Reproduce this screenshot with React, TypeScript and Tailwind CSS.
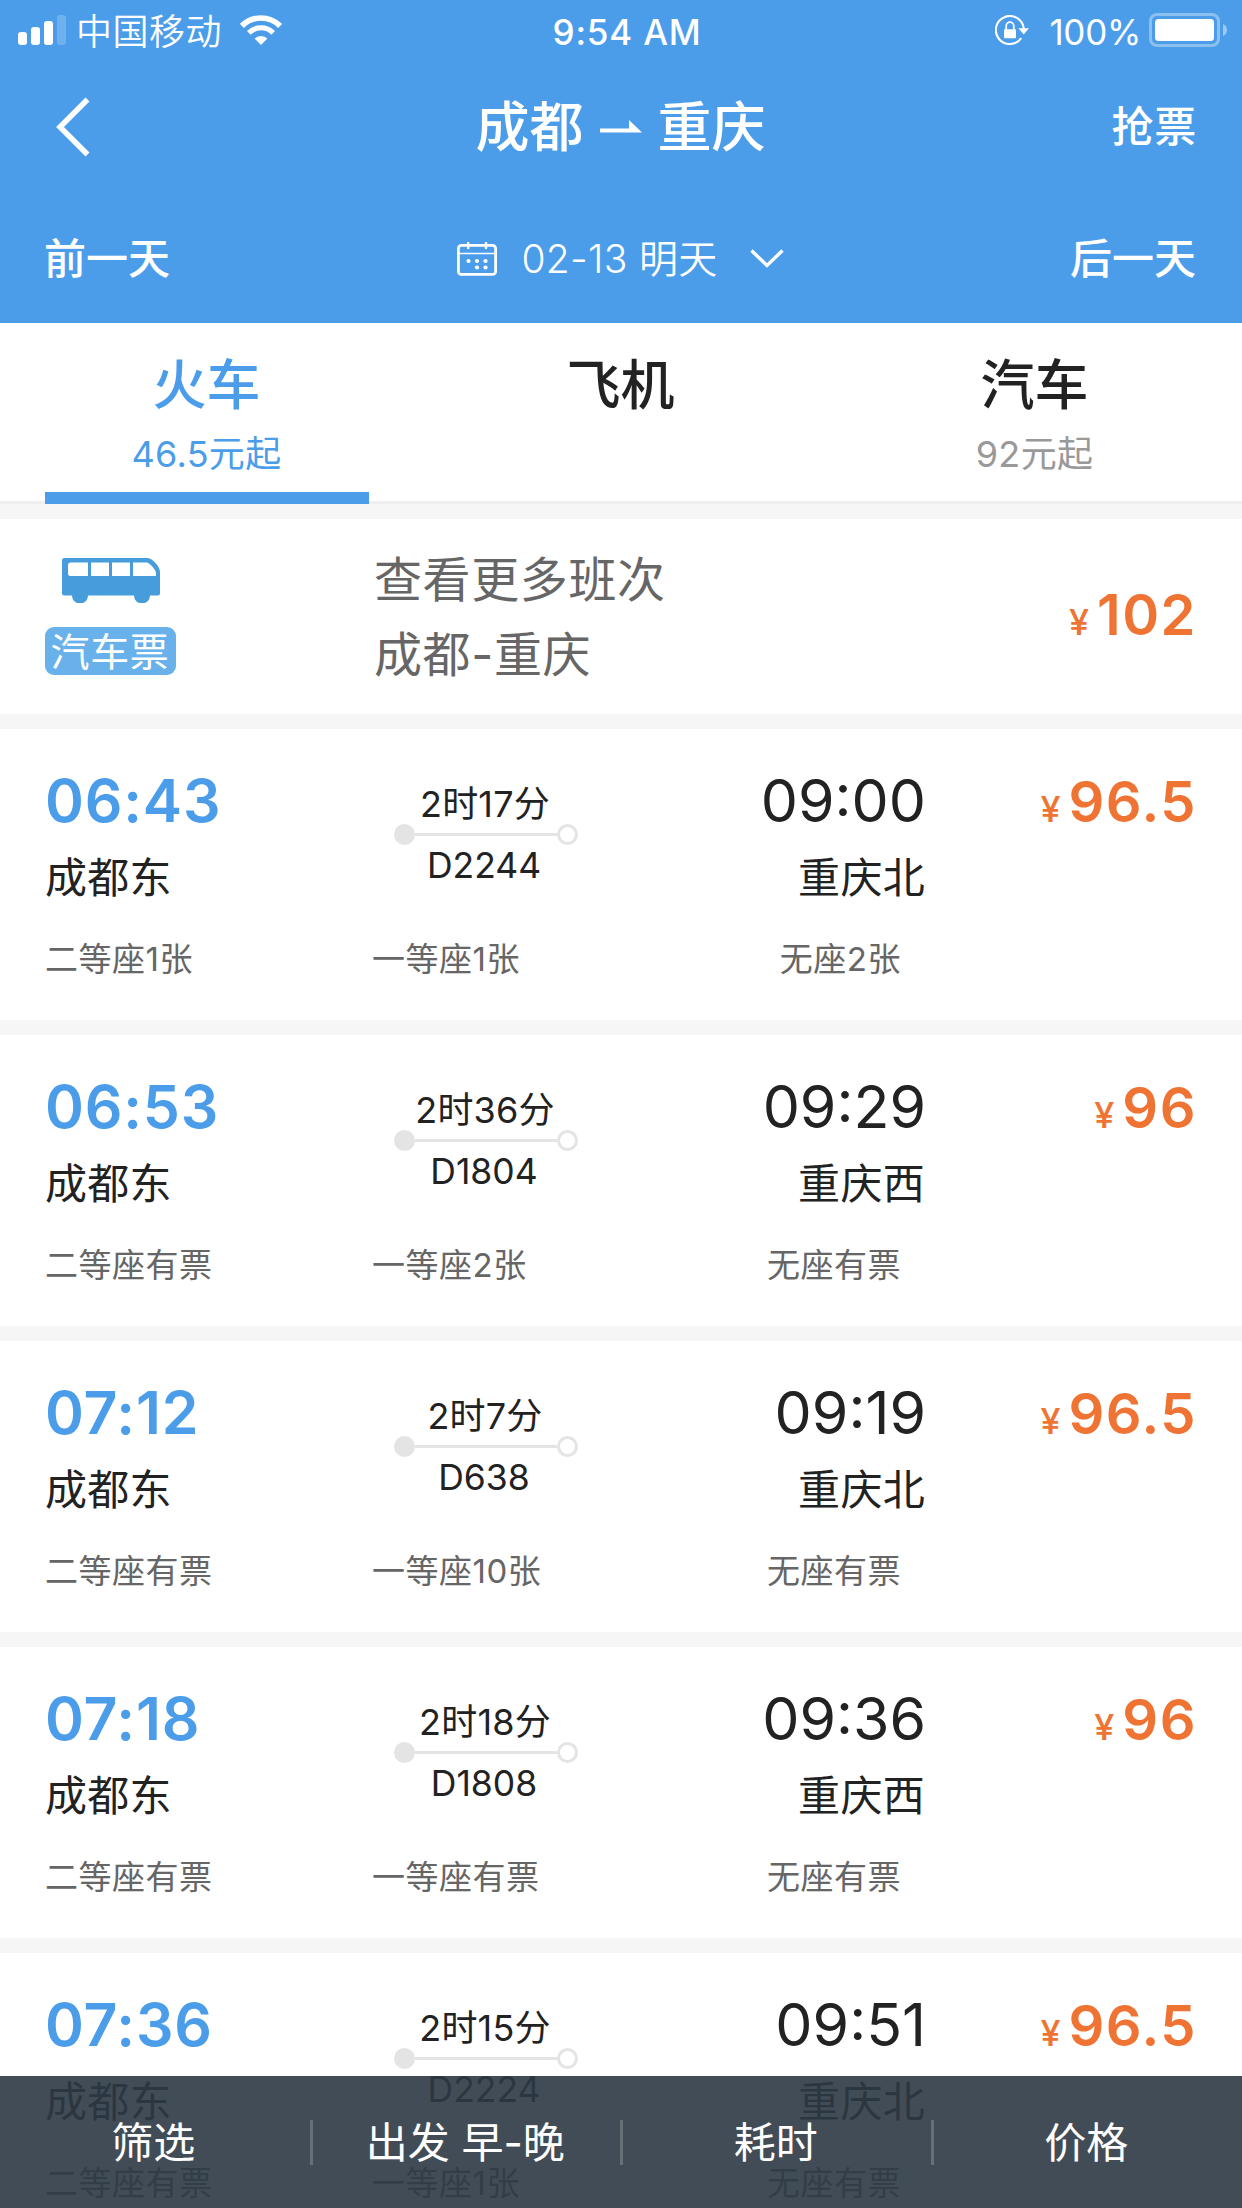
import React, { useState } from 'react';

interface Train {
  depart: string;
  arrive: string;
  from: string;
  to: string;
  duration: string;
  code: string;
  price: string;
  seats: [string, string, string];
}

const TRAINS: Train[] = [
  { depart: '06:43', arrive: '09:00', from: '成都东', to: '重庆北', duration: '2时17分', code: 'D2244', price: '96.5', seats: ['二等座1张', '一等座1张', '无座2张'] },
  { depart: '06:53', arrive: '09:29', from: '成都东', to: '重庆西', duration: '2时36分', code: 'D1804', price: '96', seats: ['二等座有票', '一等座2张', '无座有票'] },
  { depart: '07:12', arrive: '09:19', from: '成都东', to: '重庆北', duration: '2时7分', code: 'D638', price: '96.5', seats: ['二等座有票', '一等座10张', '无座有票'] },
  { depart: '07:18', arrive: '09:36', from: '成都东', to: '重庆西', duration: '2时18分', code: 'D1808', price: '96', seats: ['二等座有票', '一等座有票', '无座有票'] },
  { depart: '07:36', arrive: '09:51', from: '成都东', to: '重庆北', duration: '2时15分', code: 'D2224', price: '96.5', seats: ['二等座有票', '一等座1张', '无座有票'] },
];

const TABS = [
  { id: 'train', label: '火车', price: '46.5元起' },
  { id: 'plane', label: '飞机', price: '' },
  { id: 'bus', label: '汽车', price: '92元起' },
];

const FILTERS = ['筛选', '出发 早-晚', '耗时', '价格'];

const WifiIcon = () => (
  <svg width="42" height="30" viewBox="0 0 42 30" fill="none" stroke="white">
    <path d="M1.9 10.9A27 27 0 0 1 40.1 10.9" strokeWidth="5.6" />
    <path d="M8.8 17.8A17.3 17.3 0 0 1 33.2 17.8" strokeWidth="5.2" />
    <path d="M21 30L14.6 23.6A9 9 0 0 1 27.4 23.6Z" fill="white" stroke="none" />
  </svg>
);

const RotationLockIcon = () => (
  <svg width="34" height="30" viewBox="0 0 34 30" fill="none" stroke="white">
    <path d="M28.8 14A14 14 0 1 0 26.2 23.2" strokeWidth="2.1" />
    <path d="M23.4 13.2H34L28.7 19.4Z" fill="white" stroke="none" />
    <rect x="9" y="14.2" width="12" height="9" rx="1" fill="white" stroke="none" />
    <path d="M11.2 15V11a3.8 3.9 0 0 1 7.6 0V15" strokeWidth="1.7" />
  </svg>
);

const BatteryIcon = () => (
  <svg width="78" height="34" viewBox="0 0 78 34" fill="none">
    <rect x="1.5" y="1.5" width="68" height="31" rx="6.5" stroke="white" strokeOpacity="0.36" strokeWidth="3" />
    <rect x="6" y="6" width="59" height="22" rx="3.5" fill="white" />
    <path d="M74 11C77 12.5 78 14.5 78 17S77 21.5 74 23Z" fill="white" fillOpacity="0.45" />
  </svg>
);

const CalendarIcon = () => (
  <svg width="40" height="34" viewBox="0 0 40 34" fill="none" stroke="white">
    <rect x="1.4" y="3.4" width="37.2" height="29" rx="3" strokeWidth="2.8" />
    <path d="M2 11.5H38" strokeWidth="1.7" />
    <path d="M11.2 1.2V6M29 1.2V6" strokeWidth="2.6" strokeLinecap="round" />
    <g fill="white" stroke="none">
      <circle cx="11.5" cy="19" r="2.1" />
      <circle cx="20" cy="19" r="2.1" />
      <circle cx="28.5" cy="19" r="2.1" />
      <circle cx="20" cy="25.5" r="2.1" />
      <circle cx="28.5" cy="25.5" r="2.1" />
    </g>
  </svg>
);

const BusIcon = () => (
  <svg width="98" height="45" viewBox="0 0 98 45">
    <path d="M2.5 0H85C90 0 98 8 98 14V35.5Q98 37.5 96 37.5H88A8 8 0 0 1 72 37.5H26A8 8 0 0 1 10 37.5H2.5Q0 37.5 0 35V2.5Q0 0 2.5 0Z" fill="#479cdb" />
    <g fill="white">
      <path d="M8.5 4.5H26V18H8.5Q6 18 6 15.5V7Q6 4.5 8.5 4.5Z" />
      <path d="M29 4.5H47V18H29Z" />
      <path d="M50 4.5H68V18H50Z" />
      <path d="M71 4.5H85.5C89 6.5 94 12 94 15.5V18H71Z" />
    </g>
  </svg>
);

const StatusBar = () => (
  <div className="flex h-[60px] items-center pl-[18px] pr-[15px]">
    <div className="flex flex-1 items-center">
      <div className="flex h-[30px] w-12 items-end justify-between">
        <div className="h-[13px] w-[9px] rounded-[3px] bg-white" />
        <div className="h-[18px] w-[9px] rounded-[3px] bg-white" />
        <div className="h-6 w-[9px] rounded-[3px] bg-white" />
        <div className="h-[30px] w-[9px] rounded-[3px] bg-white/20" />
      </div>
      <span className="ml-[10px] mr-[18px] mt-[3px] text-[36px] font-[350] leading-[60px] tracking-[0.5px]">中国移动</span>
      <WifiIcon />
    </div>
    <span className="ml-[9px] mt-[3px] text-[35px] font-medium leading-[60px] tracking-[0.8px]">9:54 AM</span>
    <div className="flex flex-1 items-center justify-end">
      <RotationLockIcon />
      <span className="ml-[20px] mr-[8px] mt-[3px] text-[35px] leading-[60px] tracking-[-0.3px]">100%</span>
      <BatteryIcon />
    </div>
  </div>
);

const Header = () => (
  <header className="h-[323px] bg-[#4b9dea] text-white">
    <StatusBar />
    <div className="grid h-[134px] grid-cols-[1fr_auto_1fr] items-center px-[45px]">
      <button className="ml-[11px] w-fit">
        <svg width="34" height="60" viewBox="0 0 34 60" fill="none" stroke="white" strokeWidth="5.5">
          <path d="M31.5 2.5L4 30L31.5 57.5" />
        </svg>
      </button>
      <h1 className="-ml-px flex items-center pt-[2px] text-[54px] font-medium leading-[60px]">
        成都
        <svg className="mx-[16px] -mt-[3px]" width="42" height="13" viewBox="0 0 42 13" fill="white">
          <path d="M0 8.5H29V0L42 12.5H0Z" />
        </svg>
        重庆
      </h1>
      <button className="text-right text-[42px] font-medium leading-[60px] tracking-[0.8px]">抢票</button>
    </div>
    <div className="grid h-[129px] grid-cols-[1fr_auto_1fr] items-center px-[45px]">
      <button className="-ml-px pt-px text-left text-[42px] font-medium leading-[60px]">前一天</button>
      <button className="-ml-px flex items-center">
        <CalendarIcon />
        <span className="ml-[24px] mr-[32px] text-[39px] font-[350] leading-[60px] tracking-[0.3px]">02-13 明天</span>
        <svg width="34" height="20" viewBox="0 0 34 20" fill="none" stroke="white" strokeWidth="3.4">
          <path d="M1.5 1.5L17 16.5L32.5 1.5" />
        </svg>
      </button>
      <button className="pr-px pt-px text-right text-[42px] font-medium leading-[60px]">后一天</button>
    </div>
  </header>
);

interface PriceProps {
  value: string;
}

const Price: React.FC<PriceProps> = ({ value }) => (
  <div className="flex items-baseline justify-end gap-[8px] text-[#ef7434]">
    <span className="text-[36px] font-medium leading-none">¥</span>
    <span className="text-[56px] font-semibold leading-[62px] tracking-[1.5px]">{value}</span>
  </div>
);

const BusCard = () => (
  <section className="flex h-[195px] items-center bg-white px-[45px]">
    <div className="flex w-[329px] flex-col">
      <div className="ml-[17px] h-[69px]">
        <BusIcon />
      </div>
      <span className="h-12 w-[131px] rounded-[9px] bg-[#68b1eb] pr-px text-center text-[39px] leading-[50px] tracking-[0.6px] text-white">汽车票</span>
    </div>
    <div className="flex-1 pt-px text-[48px] leading-[75px] tracking-[0.6px] text-[#666]">
      <p>查看更多班次</p>
      <p>成都-重庆</p>
    </div>
    <div className="pb-[3px]">
      <Price value="102" />
    </div>
  </section>
);

interface TrainCardProps {
  train: Train;
}

const TrainCard: React.FC<TrainCardProps> = ({ train }) => (
  <section className="h-[291px] shrink-0 bg-white px-[45px] text-[#222]">
    <div className="grid h-[210px] grid-cols-[349px_184px_348px_1fr]">
      <div className="pt-[41px]">
        <p className="text-[59px] font-semibold leading-[62px] tracking-[0.8px] text-[#4b9dea]">{train.depart}</p>
        <p className="mt-[15px] text-[42px] leading-[62px] tracking-[0.3px]">{train.from}</p>
      </div>
      <div className="pt-[54px] text-center">
        <p className="-ml-[2px] text-[36px] leading-[43px] tracking-[0.2px]">{train.duration}</p>
        <div className="-mt-[2px] flex h-[21px] items-center">
          <div className="size-[21px] rounded-full bg-[#e4e4e4]" />
          <div className="h-[3px] flex-1 bg-[#e4e4e4]" />
          <div className="size-[21px] rounded-full border-3 border-[#e4e4e4]" />
        </div>
        <p className="-ml-[4px] text-[35.5px] leading-[42px]">{train.code}</p>
      </div>
      <div className="pt-[41px] text-right">
        <p className="text-[59px] leading-[62px]">{train.arrive}</p>
        <p className="mr-px mt-[15px] text-[42px] leading-[62px] tracking-[0.3px]">{train.to}</p>
      </div>
      <div className="pt-[42px]">
        <Price value={train.price} />
      </div>
    </div>
    <div className="grid grid-cols-[327px_264px_265px] text-[33px] leading-[40px] tracking-[0.5px] text-[#666]">
      <span>{train.seats[0]}</span>
      <span>{train.seats[1]}</span>
      <span className="text-right">{train.seats[2]}</span>
    </div>
  </section>
);

const App: React.FC = () => {
  const [activeTab, setActiveTab] = useState('train');

  return (
    <div className="relative h-[2208px] w-[1242px] overflow-hidden bg-[#f6f6f6] font-['Inter','Noto_Sans_CJK_SC',sans-serif]">
      <Header />

      {/* Transport tabs */}
      <nav className="grid h-[181px] grid-cols-3 border-b-3 border-[#efefef] bg-white">
        {TABS.map((tab) => {
          const active = tab.id === activeTab;
          return (
            <button
              key={tab.id}
              onClick={() => setActiveTab(tab.id)}
              className={`flex h-[181px] flex-col items-center pt-[32px] ${active ? 'text-[#4b9dea]' : 'text-[#222]'}`}
            >
              <span className="-ml-px text-[54px] font-medium leading-[62px]">{tab.label}</span>
              <span className={`-ml-px mt-[15px] h-[44px] text-[36px] leading-[44px] tracking-[0.3px] ${active ? '' : 'text-[#999]'}`}>{tab.price}</span>
              {active && <div className="mt-[16px] h-3 w-[324px] bg-[#4b9dea]" />}
            </button>
          );
        })}
      </nav>

      {/* Results */}
      <main className="flex flex-col gap-[15px] pt-[15px]">
        <BusCard />
        {TRAINS.map((train) => (
          <TrainCard key={train.code} train={train} />
        ))}
      </main>

      {/* Sort bar, floats over the list */}
      <footer className="absolute inset-x-0 bottom-0 grid h-[132px] grid-cols-4 items-center bg-[#2d3844]/90 text-center text-[42px] text-white">
        {FILTERS.map((label, i) => (
          <button key={label} className={`-ml-px h-[45px] pr-[3px] leading-[46px] ${i > 0 ? 'border-l-3 border-white/20' : ''}`}>
            {label}
          </button>
        ))}
      </footer>
    </div>
  );
};

export default App;
